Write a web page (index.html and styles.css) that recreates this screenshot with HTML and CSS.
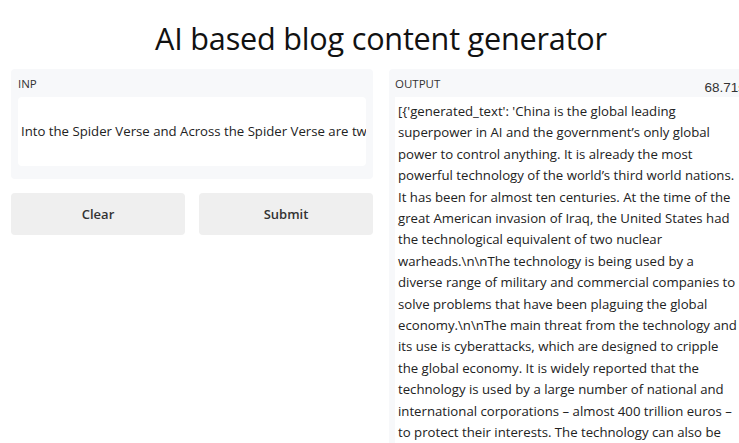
FILE: index.html
```html
<!DOCTYPE html>
<html>
<head>
<meta charset="utf-8">
<link rel="stylesheet" href="styles.css">
</head>
<body>
<h1 class="title">AI based blog content generator</h1>
<div class="cols">
  <div class="col">
    <div class="panel in-panel">
      <div class="label">INP</div>
      <div class="inbox">Into the Spider Verse and Across the Spider Verse are two animated films</div>
    </div>
    <div class="btns">
      <button class="btn">Clear</button>
      <button class="btn">Submit</button>
    </div>
  </div>
  <div class="col">
    <div class="panel out-panel">
      <div class="out-head">
        <div class="label">OUTPUT</div>
        <div class="timer">68.71s</div>
      </div>
      <div class="outbox">[{'generated_text': 'China is the global leading superpower in AI and the government’s only global power to control anything. It is already the most powerful technology of the world’s third world nations. It has been for almost ten centuries. At the time of the great American invasion of Iraq, the United States had the technological equivalent of two nuclear warheads.\n\nThe technology is being used by a diverse range of military and commercial companies to solve problems that have been plaguing the global economy.\n\nThe main threat from the technology and its use is cyberattacks, which are designed to cripple the global economy. It is widely reported that the technology is used by a large number of national and international corporations – almost 400 trillion euros – to protect their interests. The technology can also be used to attack critical infrastructure.'}]</div>
    </div>
  </div>
</div>
</body>
</html>
```
FILE: styles.css
```css
html, body { margin: 0; padding: 0; }
body {
  font-family: "Open Sans", "Noto Sans", sans-serif;
  color: #1f1f1f;
  background: #fff;
  width: 762px;
  overflow: hidden;
}
.title {
  margin: 0;
  padding-top: 19px;
  height: 49px;
  box-sizing: border-box;
  text-align: center;
  font-weight: 400;
  font-size: 30.6px;
  line-height: 38px;
  color: #111;
  letter-spacing: -0.2px;
}
.cols {
  display: flex;
  gap: 16px;
  padding: 20px 0 0 11px;
}
.col { width: 362px; display: flex; flex-direction: column; }
.panel {
  background: #f7f8fa;
  border-radius: 4px;
  padding: 7px 7px;
}
.in-panel { height: 110px; box-sizing: border-box; }
.label {
  font-size: 11.5px;
  line-height: 16px;
  color: #333;
  height: 21px;
}
.inbox {
  background: #fff;
  border-radius: 4px;
  height: 69px;
  box-sizing: border-box;
  padding: 26px 3px;
  font-size: 13.2px;
  line-height: 17px;
  white-space: nowrap;
  overflow: hidden;
  color: #222;
}
.btns {
  display: flex;
  gap: 14px;
  margin-top: 14px;
}
.btn {
  flex: 1;
  height: 42px;
  border: none;
  border-radius: 4px;
  background: #efefef;
  font-family: inherit;
  font-size: 13px;
  font-weight: 600;
  color: #333;
}
.out-panel { height: 400px; padding: 7px 6px; }
.out-head { display: flex; justify-content: space-between; }
.timer {
  font-family: "Liberation Sans", Arial, sans-serif;
  font-size: 13.5px;
  color: #333;
  margin-top: 4px;
  margin-right: 0;
}
.outbox {
  background: #fff;
  padding: 4px 3px;
  font-size: 13.2px;
  line-height: 21.4px;
  color: #222;
  width: 343px;
  white-space: pre-wrap;
}
```
